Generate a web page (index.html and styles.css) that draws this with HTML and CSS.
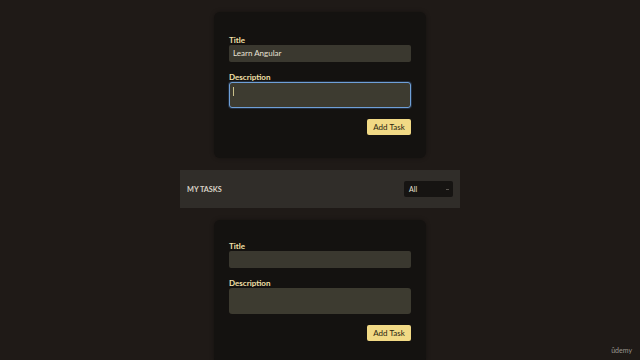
FILE: index.html
```html
<!DOCTYPE html>
<html>
<head>
<meta charset="utf-8">
<link rel="stylesheet" href="styles.css">
</head>
<body>
<main class="page">
  <form class="card card-top">
    <label class="label">Title</label>
    <div class="input">Learn Angular</div>
    <label class="label">Description</label>
    <div class="textarea focused"><span class="caret"></span></div>
    <div class="actions"><button class="btn" type="button">Add Task</button></div>
  </form>
  <section class="tasks-bar">
    <h2 class="tasks-title">MY TASKS</h2>
    <div class="select"><span>All</span><span class="arrow"></span></div>
  </section>
  <form class="card card-bottom">
    <label class="label">Title</label>
    <div class="input"></div>
    <label class="label">Description</label>
    <div class="textarea"></div>
    <div class="actions"><button class="btn" type="button">Add Task</button></div>
  </form>
</main>
<div class="watermark">ûdemy</div>
</body>
</html>
```
FILE: styles.css
```css
html, body {
  margin: 0;
  padding: 0;
  height: 360px;
  overflow: hidden;
  background: #1f1a17;
  font-family: Lato, "Open Sans", sans-serif;
}
.page {
  display: flex;
  flex-direction: column;
  align-items: center;
  padding-top: 12px;
}
.card {
  width: 212px;
  box-sizing: border-box;
  background: #141210;
  border-radius: 6px;
  padding: 23px 15px 23px 15px;
  display: flex;
  flex-direction: column;
  box-shadow: 0 0 4px rgba(0,0,0,0.35);
}
.card-bottom {
  margin-top: 12px;
  padding-top: 21px;
}
.label {
  display: block;
  font-size: 8px;
  font-weight: 700;
  line-height: 10px;
  color: #f3e0a8;
}
.input {
  height: 17px;
  box-sizing: border-box;
  background: #3a382f;
  border-radius: 2px;
  font-size: 8px;
  line-height: 17px;
  color: #e8e2d4;
  padding: 0 4px;
  margin-bottom: 10px;
}
.textarea {
  height: 26px;
  box-sizing: border-box;
  background: #3d3b30;
  border-radius: 3px;
  border: 1px solid transparent;
}
.textarea.focused {
  border-color: #6fa0d8;
  box-shadow: 0 0 0 1px rgba(80,130,200,0.25);
  padding: 4px 3px;
}
.caret {
  display: block;
  width: 1px;
  height: 9px;
  background: #c9c08a;
}
.actions {
  display: flex;
  justify-content: flex-end;
  margin-top: 11px;
}
.btn {
  width: 44px;
  height: 16px;
  padding: 0;
  border: none;
  border-radius: 2px;
  background: #f1d985;
  color: #2a2410;
  font-family: Lato, "Open Sans", sans-serif;
  font-size: 8px;
  line-height: 16px;
}
.tasks-bar {
  margin-top: 12px;
  width: 280px;
  height: 38px;
  box-sizing: border-box;
  background: #302d29;
  display: flex;
  align-items: center;
  justify-content: space-between;
  padding: 0 7px;
}
.tasks-title {
  margin: 0;
  font-size: 7.3px;
  font-weight: 700;
  color: #d9d3c8;
}
.select {
  width: 49px;
  height: 16px;
  box-sizing: border-box;
  background: #161412;
  border-radius: 2px;
  display: flex;
  align-items: center;
  justify-content: space-between;
  padding: 0 4px 0 5px;
  font-size: 7px;
  color: #e8e2d4;
}
.arrow {
  width: 3px;
  height: 1px;
  background: #5a5650;
}
.watermark {
  position: absolute;
  right: 8px;
  bottom: 6px;
  font-family: Lato, sans-serif;
  font-size: 7px;
  color: #9c9890;
}
```
